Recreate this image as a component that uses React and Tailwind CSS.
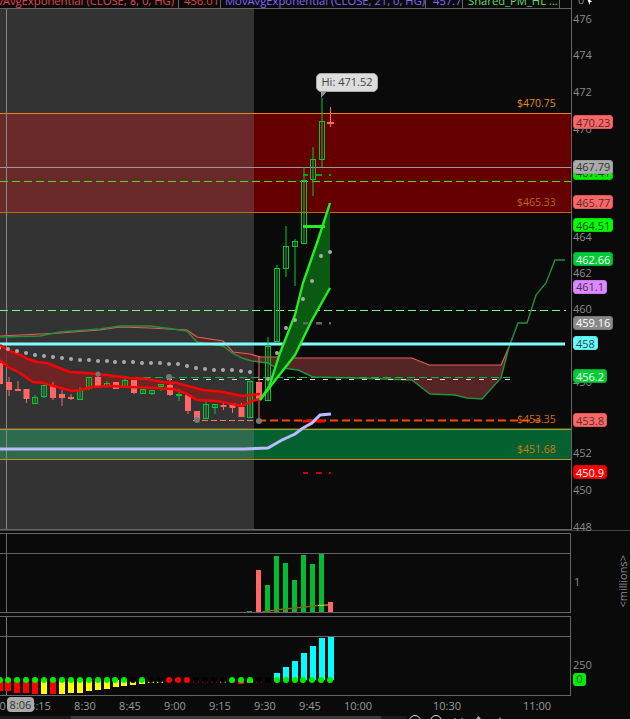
import React from 'react';

const FONT = "font-['Open_Sans',sans-serif]";

const toPts = (arr) => arr.map((p) => p.join(',')).join(' ');

// x, body top, body bottom, wick top, wick bottom, up?
const candles = [
    [0, 363, 384, 363, 384, 0], [9, 382, 390, 377, 396, 0], [18, 389, 391, 381, 391, 0], [26.5, 389, 399, 389, 403, 0],
    [35, 397, 403, 395, 403, 1], [44, 385, 396, 385, 398, 1], [53, 385, 398, 382, 400, 0], [62, 394, 398, 390, 406, 0],
    [71, 397, 399, 394, 400, 0], [80, 390, 399, 387, 399, 1], [89, 377, 388, 377, 390, 1], [98, 377, 386, 375, 386, 0],
    [107, 383, 385, 381, 385, 1], [116, 382, 389, 382, 389, 0], [125, 380, 386, 378, 386, 1], [134, 380, 393, 380, 394, 0],
    [143, 389, 393, 389, 393, 1], [152, 390, 393, 390, 395, 1], [161, 384, 386, 384, 391, 1], [170, 385, 395, 380, 396, 0],
    [179, 394, 396, 389, 401, 2], [188, 395, 411, 395, 414, 0], [197, 411, 419, 411, 420, 0], [206, 404, 418, 402, 418, 1],
    [215, 404, 407, 404, 414, 1], [223.5, 405, 407, 402, 410, 0], [232.5, 403, 408, 403, 413, 0], [241.5, 407, 417, 403, 417, 0],
    [250, 381, 417, 381, 418, 1], [259, 382, 400, 356, 420, 0], [268, 346, 400, 337, 400, 1], [277, 268, 341, 265, 341, 1],
    [286, 246, 268, 226, 277, 1], [295, 241, 246, 239, 286, 1], [304, 180, 243, 167, 244, 1], [313, 159, 179, 147, 196, 1],
    [322, 121, 159, 98, 167, 1],
];

const dots = [
    [-1, 348], [8, 349], [17, 351], [26, 353], [35, 355], [44, 356], [53, 357], [62, 358], [71, 359], [80, 360], [89, 360],
    [98, 361], [107, 361], [115, 362], [124, 362], [133, 362], [142, 363], [151, 363], [160, 363], [169, 364], [178, 364],
    [187, 366], [196, 368], [205, 369], [214, 370], [223, 370], [232, 370], [241, 371], [250, 372], [268, 379], [277, 353],
    [286, 328], [295, 320], [303, 299], [312, 281], [321, 256], [330, 252],
];

const maUpper = [[0, 345], [10, 351], [20, 355], [28, 359], [37, 362], [47, 363], [57, 367], [70, 372], [87, 373], [107, 375], [130, 378], [147, 379], [163, 382], [177, 383], [203, 390], [223, 392], [242, 396], [260, 394]];
const maLower = [[0, 360], [8, 367], [20, 373], [33, 382], [43, 383], [57, 387], [72, 391], [80, 390], [93, 387], [110, 386], [130, 387], [153, 388], [173, 389], [185, 393], [197, 400], [217, 401], [242, 406], [252, 401], [260, 399]];

const cloudTop = [[0, 336], [60, 333], [100, 330], [120, 327], [150, 328], [187, 330], [197, 337], [223, 341], [233, 352], [250, 354], [260, 357], [285, 357], [295, 358], [412, 358], [429, 365], [501, 365], [509, 347]];
const cloudBottom = [[0, 337], [40, 336], [60, 332], [100, 329], [120, 326], [150, 326], [187, 331], [197, 342], [223, 346], [232, 353], [242, 358], [252, 361], [268, 363], [275, 367], [298, 370], [313, 377], [355, 378], [412, 380], [430, 394], [455, 395], [467, 398], [482, 399], [501, 378], [509, 347], [518, 323], [527, 323], [536, 295], [546, 283], [555, 260], [565, 260]];

const coneUpper = [[260, 400], [269, 387], [280, 353], [295, 315], [303, 283], [318, 240], [330, 203]];
const coneLower = [[260, 400], [273, 383], [295, 355], [312, 320], [330, 288]];
const lavender = [[0, 449], [245, 449], [268, 448], [282, 440], [295, 434], [303, 428], [312, 423], [320, 415], [331, 414]];

const MainChart = () => (
    <svg viewBox="0 9 571 520" className="block w-[571px] h-[520px]">
        <rect x="0" y="9" width="254" height="520" fill="#333333" />
        <rect x="0" y="113" width="254" height="99" fill="#6b2a2a" />
        <rect x="254" y="113" width="317" height="99" fill="#660000" />
        <rect x="0" y="428" width="254" height="31" fill="#2e6b4e" />
        <rect x="254" y="428" width="317" height="31" fill="#05612f" />
        <line x1="0" x2="571" y1="113.5" y2="113.5" stroke="#ee7f22" />
        <line x1="0" x2="571" y1="212.5" y2="212.5" stroke="#cc6600" />
        <line x1="0" x2="571" y1="429.5" y2="429.5" stroke="#d98a1a" />
        <line x1="0" x2="571" y1="459.5" y2="459.5" stroke="#c98a1a" />
        <line x1="0" x2="571" y1="167.5" y2="167.5" stroke="#999" />
        <line x1="6.5" x2="6.5" y1="9" y2="529" stroke="#888" />
        <line x1="0" x2="571" y1="181.5" y2="181.5" stroke="#44dd22" strokeDasharray="8 4" />
        <line x1="0" x2="566" y1="310.5" y2="310.5" stroke="#77ff77" strokeDasharray="8 4" />

        {/* clouds */}
        <polygon points={toPts([...cloudTop, ...[...cloudBottom].reverse().filter((p) => p[0] < 509)])} fill="#552525" />
        <polyline points={toPts(cloudTop)} fill="none" stroke="#e85c5c" strokeWidth="1.2" />
        <polyline points={toPts(cloudBottom)} fill="none" stroke="#22913c" strokeWidth="1.4" />

        <line x1="95" x2="510" y1="377.5" y2="377.5" stroke="#00bb33" strokeDasharray="8 4" />
        <line x1="167" x2="510" y1="379.5" y2="379.5" stroke="#ddd" strokeDasharray="5 8" />
        <line x1="0" x2="565" y1="344" y2="344" stroke="#7fffff" strokeWidth="3" />
        <line x1="193" x2="258" y1="420.5" y2="420.5" stroke="#ff7777" strokeDasharray="6 3" />
        <line x1="258" x2="540" y1="420.5" y2="420.5" stroke="#ff4400" strokeWidth="2" strokeDasharray="8 4" />

        <polygon points={toPts([...maUpper, ...[...maLower].reverse()])} fill="#7a2020" opacity="0.8" />

        {/* candles */}
        {candles.map(([x, top, bottom, wt, wb, up]) => {
            const color = up ? '#00c832' : '#ff6666';
            return (
                <g key={x}>
                    <line x1={x} x2={x} y1={wt} y2={wb} stroke={color} />
                    {up === 1 ? (
                        <rect x={x - 2.5} y={top + 0.5} width="5" height={bottom - top} fill="none" stroke={color} />
                    ) : (
                        <rect x={x - 3} y={top} width="6" height={bottom - top} fill={color} />
                    )}
                </g>
            );
        })}
        <line x1="330.5" x2="330.5" y1="107" y2="127" stroke="#ff6666" />
        <rect x="327" y="122" width="7" height="2" fill="#ff6666" />

        <polyline points={toPts(maUpper)} fill="none" stroke="#ff0000" strokeWidth="2.5" />
        <polyline points={toPts(maLower)} fill="none" stroke="#ff0000" strokeWidth="2.5" />

        {/* cone */}
        <polygon points={toPts([...coneUpper, ...[...coneLower].reverse()])} fill="#0a5a12" />
        <polyline points={toPts(coneUpper)} fill="none" stroke="#22ee22" strokeWidth="2.4" />
        <polyline points={toPts(coneLower)} fill="none" stroke="#22ee22" strokeWidth="2.4" />

        {dots.map(([x, y]) => (
            <circle key={x} cx={x} cy={y} r="2" fill="#aaaaaa" />
        ))}
        <circle cx="98" cy="374" r="2.5" fill="#777" />
        <circle cx="169" cy="377" r="3" fill="#777" />
        <circle cx="197" cy="420" r="3" fill="#777" />
        <circle cx="259" cy="421" r="3" fill="#777" />

        {/* target dashes */}
        <rect x="303" y="225" width="22" height="3" fill="#22ee22" />
        <rect x="303" y="420" width="22" height="2.5" fill="#ff0000" />
        {[[303, 5], [316, 6], [329, 2]].map(([x, w]) => (
            <g key={x}>
                <rect x={x} y="174" width={w} height="2" fill="#00aa00" />
                <rect x={x} y="322" width={w} height="2.5" fill="#666" />
                <rect x={x} y="472" width={w} height="2" fill="#cc0000" />
            </g>
        ))}

        <polyline points={toPts(lavender)} fill="none" stroke="#bbbbff" strokeWidth="3" />
    </svg>
);

const volumeBars = [
    [247, 611, '#00aa33'], [256, 570, '#ff6666'], [265, 585, '#00bb33'], [274, 556, '#00bb33'], [283, 563, '#00bb33'],
    [292, 580, '#00bb33'], [301, 555, '#00bb33'], [310, 564, '#00bb33'], [319, 554, '#00bb33'], [328, 602, '#ff6666'],
];

const VolumeChart = () => (
    <svg viewBox="0 534 570 78" className="block w-[570px] h-[78px]">
        <line x1="0" x2="570" y1="553.5" y2="553.5" stroke="#666" />
        <line x1="6.5" x2="6.5" y1="534" y2="612" stroke="#666" />
        {volumeBars.map(([x, top, fill]) => (
            <rect key={x} x={x} y={top} width="5" height={612 - top} fill={fill} />
        ))}
        <polyline points="262,612 280,609.5 300,607.5 318,605.5" fill="none" stroke="#806a10" strokeWidth="1.3" />
        <line x1="318" x2="328" y1="605.5" y2="605" stroke="#e6d020" />
    </svg>
);

// x, bar bottom, colour
const oscBars = [
    [0, 691, '#ff0000'], [8, 691, '#ff0000'], [17, 693, '#ff0000'], [26, 693, '#ff0000'], [35, 694, '#ff0000'], [44, 694, '#ffff00'],
    [53, 694, '#ff0000'], [62, 694, '#ffff00'], [71, 693, '#ffff00'], [80, 693, '#ffff00'], [89, 691, '#ffff00'], [98, 690, '#ffff00'],
    [107, 689, '#ffff00'], [116, 687, '#ffff00'], [124, 686, '#ffff00'], [133, 685, '#ffff00'], [142, 684, '#ffff00'], [151, 683, '#ffff00'],
    [160, 683, '#ffff00'], [196, 682.5, '#ff0000'], [205, 682.5, '#ff0000'], [214, 682.5, '#ff0000'], [223, 682.5, '#ffff00'], [232, 682.5, '#ff0000'],
    [241, 684, '#ff0000'], [250, 682.5, '#ffff00'], [259, 682.5, '#ff0000'],
];
const oscDots = [
    [0, 1], [8, 1], [17, 1], [26, 1], [35, 1], [44, 1], [53, 1], [62, 1], [71, 1], [80, 1], [89, 1], [98, 1], [107, 1], [115, 1], [124, 1],
    [133, 0], [142, 1], [151, 0], [160, 0], [169, 2], [178, 2], [187, 2], [196, 0], [205, 0], [214, 0], [223, 0], [232, 1], [241, 1], [250, 1],
    [259, 0], [268, 0], [277, 1], [286, 1], [295, 1], [303, 1], [312, 1], [321, 1], [330, 1],
];
const cyanBars = [[274, 673], [283, 667], [292, 661], [301, 653], [310, 646], [319, 638], [328, 637]];

const OscChart = () => (
    <svg viewBox="0 617 570 78" className="block w-[570px] h-[78px]">
        <line x1="0" x2="570" y1="636.5" y2="636.5" stroke="#666" />
        <line x1="6.5" x2="6.5" y1="617" y2="695" stroke="#777" />
        {oscBars.map(([x, bottom, fill]) => (
            <rect key={x} x={x - 3} y="680" width="6" height={bottom - 680} fill={fill} />
        ))}
        {cyanBars.map(([x, top]) => (
            <rect key={x} x={x} y={top} width="6" height={680 - top} fill="#00ffff" />
        ))}
        {oscDots.map(([x, kind]) => (
            <circle key={x} cx={x} cy="680" r="3" fill={kind === 1 ? '#00ee00' : kind === 2 ? '#ff0000' : '#000000'} />
        ))}
    </svg>
);

const ticks = [
    [476, 19], [474, 55], [472, 92], [470, 129], [464, 237], [462, 273], [460, 309], [456, 382], [452, 453], [450, 490], [448, 527],
];

const badges = [
    { label: '467.41', y: 172.5, cls: 'bg-[#00ee00] border-[#00cc00] text-[#333]' },
    { label: '470.23', y: 122, cls: 'bg-[#ff6666] border-[#dd5555] text-[#443333]' },
    { label: '467.79', y: 166.5, cls: 'bg-[#aaaaaa] border-[#999999] text-[#333]' },
    { label: '465.77', y: 202, cls: 'bg-[#ff6666] border-[#dd5555] text-[#443333]' },
    { label: '464.51', y: 225, cls: 'bg-[#00ff00] border-[#00dd00] text-[#224422]' },
    { label: '462.66', y: 259, cls: 'bg-[#00cc33] border-[#00aa33] text-white' },
    { label: '461.1', y: 286.5, cls: 'bg-[#dd88ff] border-[#cc77ee] text-[#443355]' },
    { label: '459.16', y: 322.5, cls: 'bg-[#888888] border-[#777777] text-white' },
    { label: '458', y: 343, cls: 'bg-[#66ffff] border-[#55eeee] text-[#334444]' },
    { label: '456.2', y: 376, cls: 'bg-[#00cc33] border-[#00aa33] text-white' },
    { label: '453.8', y: 420, cls: 'bg-[#ff6666] border-[#dd5555] text-[#553333]' },
    { label: '450.9', y: 472, cls: 'bg-[#ff0000] border-[#dd0000] text-white' },
];

const priceNotes = [
    { label: '$470.75', y: 104, cls: 'text-[#e08a1e]' },
    { label: '$465.33', y: 203, cls: 'text-[#b86a10]' },
    { label: '$453.35', y: 420, cls: 'text-[#d07010]' },
    { label: '$451.68', y: 450, cls: 'text-[#d07a10]' },
];

const times = [
    ['8:00', -5], ['8:15', 40], ['8:30', 85], ['8:45', 130], ['9:00', 175], ['9:15', 220], ['9:30', 265], ['9:45', 310],
    ['10:00', 358], ['10:30', 447], ['11:00', 537],
];

const headerCells = [
    { label: 'MovAvgExponential (CLOSE, 8, 0, HG)', w: 'w-[179px] justify-end pr-[4px]', cls: 'text-[#e04848]' },
    { label: '456.01', w: 'w-[42px] pl-[5px]', cls: 'text-[#e04848]' },
    { label: 'MovAvgExponential (CLOSE, 21, 0, HG)', w: 'w-[205px] pl-[4px]', cls: 'text-[#8068ff]' },
    { label: '457.7', w: 'w-[37px] pl-[7px]', cls: 'text-[#8068ff]' },
    { label: 'Shared_PM_HL ...', w: 'w-[97px] pl-[5px]', cls: 'text-[#66dd66]' },
];

const App = () => {
    return (
        <div className={`relative w-[630px] h-[719px] overflow-hidden bg-[#0a0a0a] text-[10.5px] ${FONT}`}>
            {/* price pane */}
            <div className="flex h-[530px]">
                <div className="w-[572px] border-r border-b border-[#666] flex flex-col">
                    <div className="flex h-[9px] border-b border-[#666] overflow-hidden text-[11.25px] leading-[12px]">
                        {headerCells.map((c) => (
                            <div key={c.label} className={`${c.w} flex shrink-0 whitespace-nowrap -mt-[5px] h-[15px] border-r border-[#666] ${c.cls}`}>
                                {c.label}
                            </div>
                        ))}
                    </div>
                    <div className="relative flex-1">
                        <MainChart />
                        {priceNotes.map((n) => (
                            <span key={n.label} className={`absolute left-[517px] -translate-y-1/2 ${n.cls}`} style={{ top: n.y - 9 }}>
                                {n.label}
                            </span>
                        ))}
                        <div className="absolute left-[316px] top-[64px] h-[19px] w-[62px] rounded-[5px] bg-[#dddddd] border border-[#aaa] text-[#444] text-[11px] flex items-center justify-center">
                            Hi: 471.52
                        </div>
                        <svg viewBox="0 0 8 8" className="absolute left-[320px] top-[82px] w-2 h-2">
                            <path d="M1 0 L1 7 L7 0 Z" fill="#999" />
                        </svg>
                    </div>
                </div>
                <div className="relative flex-1 text-[#8a8a8a]">
                    <span className="absolute left-[6px] -top-[8px] text-[11px]">0</span>
                    <svg viewBox="0 0 8 8" className="absolute left-[14px] top-0 w-[7px] h-[7px]">
                        <path d="M1 -3 L7 2 L4.5 2.5 L4 6 Z" fill="#ffffff" />
                    </svg>
                    {ticks.map(([v, y]) => (
                        <span key={v} className="absolute left-[1px] -translate-y-1/2 text-[11px]" style={{ top: y }}>{v}</span>
                    ))}
                    {badges.map((b) => (
                        <span
                            key={b.label}
                            className={`absolute left-[1px] -translate-y-1/2 h-[14px] px-[2px] rounded-[3px] border flex items-center text-[11px] leading-none ${b.cls}`}
                            style={{ top: b.y }}
                        >
                            {b.label}
                        </span>
                    ))}
                </div>
            </div>

            <div className="h-[3px] border-t border-[#444]" />

            {/* volume pane */}
            <div className="flex h-[80px]">
                <div className="w-[571px] h-[80px] border-t border-r border-b border-[#666] overflow-hidden">
                    <VolumeChart />
                </div>
                <div className="relative flex-1 text-[#8a8a8a] text-[11px]">
                    <span className="absolute left-[3px] top-[41px]">1</span>
                    <span className="absolute left-[3px] top-[76px] h-[4px] overflow-hidden leading-[15px]">0</span>
                    <span className="absolute left-[45px] top-[22px] [writing-mode:vertical-rl] rotate-180 text-[11px] leading-[14px]">&lt;millions&gt;</span>
                </div>
            </div>

            <div className="h-[3px]" />

            {/* oscillator pane */}
            <div className="flex h-[80px]">
                <div className="w-[571px] h-[80px] border-t border-r border-b border-[#666] overflow-hidden">
                    <OscChart />
                </div>
                <div className="relative flex-1 text-[#8a8a8a] text-[11px]">
                    <span className="absolute left-[2px] top-[41px]">250</span>
                    <span className="absolute left-[2px] top-[57px] h-[13px] w-[13px] rounded-[3px] bg-[#00ee00] text-[#225522] flex items-center justify-center">0</span>
                </div>
            </div>

            {/* time axis */}
            <div className="relative h-[20px] text-[#999] text-[11px] leading-[20px]">
                {times.map(([t, x]) => (
                    <span key={t} className="absolute top-0 -translate-x-1/2" style={{ left: x }}>{t}</span>
                ))}
                <span className="absolute left-[7px] top-[1px] h-[15px] w-[27px] rounded-[4px] bg-[#aaaaaa] text-[#333] flex items-center justify-center leading-none">8:06</span>
            </div>

            {/* scroll bar */}
            <div className="absolute left-0 right-0 bottom-0 h-[3px] flex">
                <div className="w-[71px] bg-[#1a1a1a]" />
                <div className="w-[310px] bg-[#3a3a3a]" />
                <div className="w-[26px] bg-[#1a1a1a]" />
            </div>
            <svg viewBox="0 0 100 5" className="absolute left-[405px] bottom-0 w-[100px] h-[5px]">
                <circle cx="10" cy="7" r="5.5" fill="none" stroke="#ddd" />
                <circle cx="31" cy="7" r="5.5" fill="none" stroke="#ddd" />
                <circle cx="50" cy="5" r="1" fill="#888" />
                <circle cx="57" cy="5" r="1" fill="#888" />
                <path d="M71 5 L73.5 2 L76 5 Z" fill="#aaa" />
                <circle cx="95" cy="4.5" r="1" fill="#888" />
            </svg>
        </div>
    );
};

export default App;
